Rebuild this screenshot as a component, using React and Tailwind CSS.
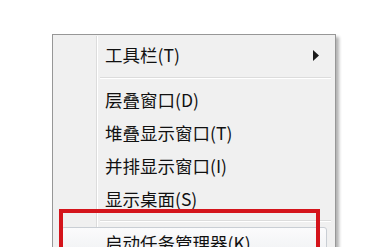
import React from 'react';

const font = { fontFamily: '"Noto Sans CJK SC", "Noto Sans", sans-serif' };

function Item({ label, arrow, tall }) {
  return (
    <div className={`flex items-center pl-[52px] pr-[16px] ${tall ? 'h-[36px]' : 'h-[33px]'}`}>
      <span className="flex-1 text-[17.5px] leading-none text-[#111]">{label}</span>
      {arrow && (
        <svg width="6" height="11" viewBox="0 0 6 11" className="block">
          <polygon points="0,0 6,5.5 0,11" fill="#1a1a1a" />
        </svg>
      )}
    </div>
  );
}

function Separator({ h }) {
  return (
    <div className={`flex flex-col justify-center pl-[47px] pr-[4px] ${h}`}>
      <div className="border-t border-[#dcdcdc]" />
      <div className="border-t border-white" />
    </div>
  );
}

export default function App() {
  return (
    <div className="h-[247px] w-[388px] overflow-hidden bg-white" style={font}>
      <div className="relative ml-[52px] mt-[34px] w-[284px] h-[260px] border border-[#979797] bg-[#f0f0f0] pt-[2px] shadow-[3px_3px_3px_rgba(0,0,0,0.3)]">
        {/* icon column line */}
        <div className="absolute left-[43px] top-[1px] bottom-0 w-[2px] border-l border-[#dcdcdc] border-r border-r-white" />

        <div className="relative">
          <Item label="工具栏(T)" arrow tall />
          <Separator h="h-[10px]" />
          <Item label="层叠窗口(D)" />
          <Item label="堆叠显示窗口(T)" />
          <Item label="并排显示窗口(I)" />
          <Item label="显示桌面(S)" />
          <Separator h="h-[11px]" />
          <div className="mx-[8px] mt-[1px] h-[34px] rounded-[3px] border border-[#c9ced4] bg-gradient-to-b from-[#fbfbfc] to-[#eef0f2] flex items-start pl-[43px] pt-[6px]">
            <span className="text-[17.5px] leading-none text-[#111]">启动任务管理器(K)</span>
          </div>
        </div>

        {/* red annotation frame */}
        <div className="absolute left-[6px] top-[174px] w-[261px] h-[90px] border-4 border-[#d4141b]" />
      </div>
    </div>
  );
}
